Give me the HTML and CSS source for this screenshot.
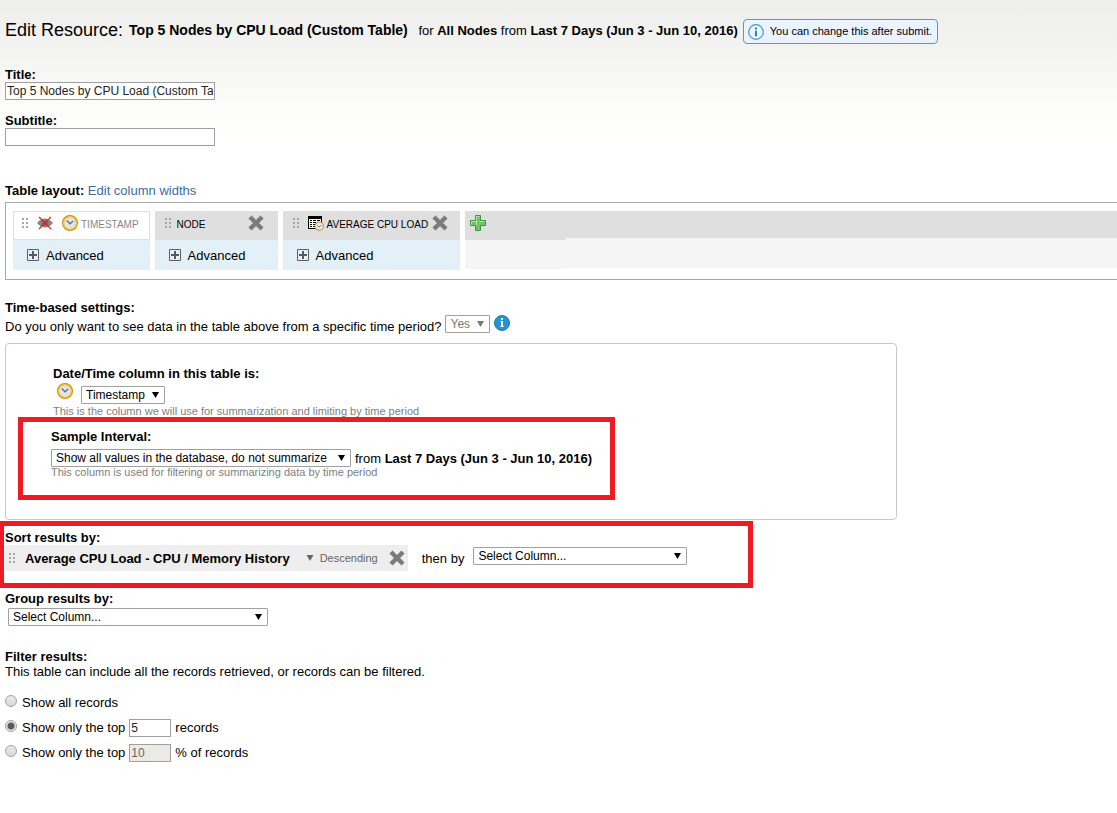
FILE: index.html
```html
<!DOCTYPE html>
<html lang="en">
<head>
    <meta charset="utf-8">
    <title>Edit Resource</title>
    <link rel="stylesheet" href="styles.css">
</head>
<body>
    <!-- shared icons -->
    <svg class="sprite" width="0" height="0" aria-hidden="true">
        <symbol id="grip" viewBox="0 0 6 10">
            <path fill="#a6a6a6" d="M0 0h2v2H0zM4 0h2v2H4zM0 4h2v2H0zM4 4h2v2H4zM0 8h2v2H0zM4 8h2v2H4z"/>
        </symbol>
        <symbol id="clock" viewBox="0 0 16 16">
            <circle cx="8" cy="8" r="7" fill="#dfe4ee" stroke="#c98a00" stroke-width="2"/>
            <circle cx="8" cy="8" r="6.5" fill="none" stroke="#f6cf3c" stroke-width="1.2"/>
            <path d="M4.8 5.6L8 8.8l3.2-2.8" fill="none" stroke="#6a7077" stroke-width="1.4"/>
        </symbol>
        <symbol id="cross" viewBox="0 0 16 16">
            <path d="M2 2l12 12M14 2L2 14" stroke="#7b7b7b" stroke-width="4.4"/>
        </symbol>
        <symbol id="expand" viewBox="0 0 12 12">
            <path d="M.5.5h11v11H.5z" fill="none" stroke="#5f5f5f"/>
            <path d="M2 6h8M6 2v8" stroke="#5a5a5a" stroke-width="2"/>
        </symbol>
        <symbol id="arrow" viewBox="0 0 7 6">
            <path d="M0 0h7L3.5 6z" fill="currentColor"/>
        </symbol>
    </svg>

    <header class="header">
        <h1>Edit Resource:</h1>
        <p class="summary"><b class="resource">Top 5 Nodes by CPU Load (Custom Table)</b> for <b>All Nodes</b> from <b>Last 7 Days (Jun 3 - Jun 10, 2016)</b></p>
        <span class="notice">
            <svg width="16" height="16" viewBox="0 0 16 16" aria-hidden="true">
                <circle cx="8" cy="8" r="7.3" fill="none" stroke="#3f9cc8" stroke-width="1.2"/>
                <path d="M7 3.6h2v2H7zM7 6.8h2v5.4H7z" fill="#2e87b8"/>
            </svg>
            You can change this after submit.
        </span>
    </header>

    <form>
        <div class="field">
            <label for="title">Title:</label>
            <input type="text" id="title" class="text-box" value="Top 5 Nodes by CPU Load (Custom Table)">
        </div>
        <div class="field">
            <label for="subtitle">Subtitle:</label>
            <input type="text" id="subtitle" class="text-box">
        </div>

        <section class="layout">
            <h2>Table layout:</h2> <a href="#">Edit column widths</a>
            <div class="columns">
                <div class="column timestamp">
                    <div class="column-head">
                        <svg class="grip" width="6" height="10"><use href="#grip"/></svg>
                        <svg class="eye" width="16" height="14" viewBox="0 0 16 14">
                            <path d="M0 7Q8-2 16 7Q8 16 0 7z" fill="#858585"/>
                            <circle cx="8" cy="7" r="2.6" fill="#666"/>
                            <path d="M2 1l12 12M14 1L2 13" stroke="#e81c1c" stroke-width="1.2"/>
                        </svg>
                        <svg class="clock" width="16" height="16"><use href="#clock"/></svg>
                        <span>TIMESTAMP</span>
                    </div>
                    <button type="button" class="advanced"><svg width="12" height="12"><use href="#expand"/></svg>Advanced</button>
                </div>
                <div class="column node">
                    <div class="column-head">
                        <svg class="grip" width="6" height="10"><use href="#grip"/></svg>
                        <span>NODE</span>
                        <button type="button" class="remove" aria-label="Remove column"><svg width="16" height="16"><use href="#cross"/></svg></button>
                    </div>
                    <button type="button" class="advanced"><svg width="12" height="12"><use href="#expand"/></svg>Advanced</button>
                </div>
                <div class="column load">
                    <div class="column-head">
                        <svg class="grip" width="6" height="10"><use href="#grip"/></svg>
                        <svg class="table-clock" width="16" height="16" viewBox="0 0 16 16">
                            <path d="M0 1h14v13H0z" fill="#000"/>
                            <path d="M1 4h12v9H1z" fill="#fff"/>
                            <path d="M2 5.5h2M5 5.5h3M9 5.5h3M2 7.5h2M5 7.5h3M9 7.5h3M2 9.5h2M5 9.5h3M2 11.5h2M5 11.5h2" stroke="#000"/>
                            <circle cx="11.2" cy="11.2" r="4.2" fill="#e6eaf2" stroke="#dc9333" stroke-width="1.2"/>
                            <path d="M9.2 10.2l2 2 2-2" fill="none" stroke="#6f7885"/>
                        </svg>
                        <span>AVERAGE CPU LOAD</span>
                        <button type="button" class="remove" aria-label="Remove column"><svg width="16" height="16"><use href="#cross"/></svg></button>
                    </div>
                    <button type="button" class="advanced"><svg width="12" height="12"><use href="#expand"/></svg>Advanced</button>
                </div>
                <div class="add-column">
                    <button type="button" aria-label="Add column">
                        <svg width="16" height="16" viewBox="0 0 16 16">
                            <path d="M5.5.5h5v5h5v5h-5v5h-5v-5h-5v-5h5z" fill="#70c464" stroke="#3f9445"/>
                            <path d="M6.5 10V1.5h3M1.5 9.5v-3h5M9.5 6.5h5" fill="none" stroke="#b4e6a4"/>
                        </svg>
                    </button>
                </div>
                <div class="filler"></div>
            </div>
        </section>

        <section class="time">
            <h2>Time-based settings:</h2>
            <div class="question">
                <label for="period">Do you only want to see data in the table above from a specific time period?</label>
                <span class="drop">
                    <select id="period" disabled><option>Yes</option></select>
                    <svg width="7" height="6"><use href="#arrow"/></svg>
                </span>
                <svg class="info" width="16" height="16" viewBox="0 0 16 16">
                    <circle cx="8" cy="8" r="7.5" fill="#2593ce" stroke="#1b7cb3"/>
                    <path d="M7 3h2v2H7zM6.5 6H9v5h.7v1H6.3v-1H7V7h-.5z" fill="#fff"/>
                </svg>
            </div>

            <div class="panel">
                <div class="date-column">
                    <label for="datetime">Date/Time column in this table is:</label>
                    <div class="row">
                        <svg class="clock" width="16" height="16"><use href="#clock"/></svg>
                        <span class="drop">
                            <select id="datetime"><option>Timestamp</option></select>
                            <svg width="7" height="6"><use href="#arrow"/></svg>
                        </span>
                    </div>
                    <p class="hint">This is the column we will use for summarization and limiting by time period</p>
                </div>
                <div class="highlight interval">
                    <label for="interval">Sample Interval:</label>
                    <div class="row">
                        <span class="drop">
                            <select id="interval"><option>Show all values in the database, do not summarize</option></select>
                            <svg width="7" height="6"><use href="#arrow"/></svg>
                        </span>
                        <span>from <b>Last 7 Days (Jun 3 - Jun 10, 2016)</b></span>
                    </div>
                    <p class="hint">This column is used for filtering or summarizing data by time period</p>
                </div>
            </div>
        </section>

        <section class="highlight sort">
            <h2>Sort results by:</h2>
            <div class="row">
                <div class="sort-item">
                    <svg class="grip" width="6" height="10"><use href="#grip"/></svg>
                    <b>Average CPU Load - CPU / Memory History</b>
                    <button type="button" class="direction"><svg width="8" height="6"><use href="#arrow"/></svg>Descending</button>
                    <button type="button" class="remove" aria-label="Remove sorting"><svg width="16" height="16"><use href="#cross"/></svg></button>
                </div>
                <label for="then-by">then by</label>
                <span class="drop">
                    <select id="then-by"><option>Select Column...</option></select>
                    <svg width="7" height="6"><use href="#arrow"/></svg>
                </span>
            </div>
        </section>

        <section class="group">
            <label for="group-by">Group results by:</label>
            <span class="drop">
                <select id="group-by"><option>Select Column...</option></select>
                <svg width="7" height="6"><use href="#arrow"/></svg>
            </span>
        </section>

        <section class="filter">
            <h2>Filter results:</h2>
            <p>This table can include all the records retrieved, or records can be filtered.</p>
            <div class="choice">
                <input type="radio" name="filter" id="all">
                <label for="all">Show all records</label>
            </div>
            <div class="choice">
                <input type="radio" name="filter" id="top" checked>
                <label for="top">Show only the top</label>
                <input type="text" class="text-box" value="5" aria-label="Number of records">
                <span>records</span>
            </div>
            <div class="choice">
                <input type="radio" name="filter" id="percent">
                <label for="percent">Show only the top</label>
                <input type="text" class="text-box" value="10" aria-label="Percent of records" disabled>
                <span>% of records</span>
            </div>
        </section>
    </form>
</body>
</html>
```

FILE: styles.css
```css
* {
    box-sizing: border-box;
}
body {
    margin: 0;
    font-family: "Liberation Sans", Arial, sans-serif;
    font-size: 13px;
    line-height: 15px;
    color: #000;
    background: #fff linear-gradient(#eeeeed, #f3f3f2 50px, #fdfdfc 110px, #fff 150px) no-repeat;
}
h1, h2, p {
    margin: 0;
}
h2 {
    font-size: 13px;
    line-height: 15px;
}
svg {
    flex: none;
    display: block;
}
.sprite {
    position: absolute;
}
button {
    border: none;
    padding: 0;
    background: none;
    font: inherit;
    cursor: pointer;
}
a {
    color: #41699f;
    text-decoration: none;
}

/* header */
.header {
    display: flex;
    align-items: center;
    padding: 19px 5px 0;
    margin-bottom: 23px;
    white-space: nowrap;
}
.header h1 {
    font-size: 18px;
    line-height: 20px;
    font-weight: normal;
    margin: 0 6px 4px 0;
}
.summary {
    padding-bottom: 2px;
}
.resource {
    margin-right: 7px;
    font-size: 14px;
}
.notice {
    display: flex;
    align-items: center;
    gap: 6px;
    height: 25px;
    margin-left: 5px;
    padding: 0 5px 0 4px;
    border: 1px solid #4a9fc8;
    border-radius: 4px;
    background: #eaf3ff;
    font-size: 11px;
}

/* form controls */
.field {
    padding-left: 5px;
    margin-bottom: 13px;
}
.field label,
.date-column label,
.interval label,
.group label {
    display: block;
    font-weight: bold;
}
.text-box {
    display: block;
    width: 210px;
    height: 18px;
    padding: 0 1px;
    border: 1px solid #a0a0a0;
    background: #fff;
    font-family: inherit;
    font-size: 12px;
    color: #222;
}
.text-box:disabled {
    background: #ebebe4;
    color: #666;
}
.drop {
    display: inline-grid;
    align-items: center;
}
.drop select,
.drop svg {
    grid-area: 1 / 1;
}
.drop select {
    appearance: none;
    width: 100%;
    height: 18px;
    padding: 0 19px 0 4px;
    border: 1px solid #a0a0a0;
    border-radius: 1px;
    background: #fff;
    font-family: inherit;
    font-size: 12px;
    color: #000;
    opacity: 1;
}
.drop svg {
    justify-self: end;
    margin-right: 6px;
    pointer-events: none;
}
.drop select:disabled,
.drop select:disabled + svg {
    color: #777;
}
.row {
    display: flex;
    align-items: center;
}

/* table layout */
.layout {
    padding: 24px 0 20px 5px;
}
.layout h2 {
    display: inline-block;
}
.columns {
    display: flex;
    gap: 5px;
    margin-top: 4px;
    padding: 8px 0 9px 7px;
    border: 1px solid #a8a8a8;
    border-right: none;
}
.column {
    background: #e4f0f8;
}
.column-head {
    display: flex;
    align-items: center;
    height: 29px;
    padding: 0 14px 5px 10px;
    background: #dfdfdf;
    font-size: 10px;
}
.column-head .grip {
    margin-right: 6px;
}
.column-head span {
    padding-top: 3px;
}
.timestamp .column-head {
    padding: 0 10px 5px 8px;
    border: 1px solid #dfdfdf;
    background: #fff;
    color: #888;
}
.timestamp .column-head .grip,
.load .column-head .grip,
.eye {
    margin-right: 9px;
}
.column-head .clock,
.table-clock {
    margin-right: 3px;
}
.node {
    width: 123px;
}
.node .remove {
    margin-left: auto;
}
.load .column-head {
    padding-right: 12px;
}
.load .remove {
    margin-left: 4px;
}
.advanced {
    display: flex;
    align-items: center;
    gap: 7px;
    height: 30px;
    padding-left: 14px;
}
.add-column {
    width: 100px;
    height: 58px;
    background: linear-gradient(#dfdfdf 29px, #f5f5f5 29px);
}
.add-column button {
    padding: 4px 5px;
}
.filler {
    flex: 1;
    height: 57px;
    margin-left: -5px;
    background: linear-gradient(#dfdfdf 27px, #f5f5f5 27px);
}

/* time-based settings */
.time h2,
.question {
    margin-left: 5px;
}
.question {
    display: flex;
    align-items: flex-start;
    gap: 4px;
}
.question label {
    padding-top: 4px;
}
.panel {
    max-width: 892px;
    margin: 9px 5px 0;
    padding: 22px 12px 19px;
    border: 1px solid #c8c8c8;
    border-radius: 4px;
}
.date-column {
    padding-left: 35px;
}
.date-column .row {
    align-items: flex-start;
    gap: 8px;
    padding: 2px 0 2px 4px;
}
.date-column .drop {
    margin-top: 3px;
}
.hint {
    font-size: 11px;
    line-height: 11px;
    color: #808080;
}
.highlight {
    width: fit-content;
    border: 5px solid #ed1c24;
}
.interval {
    padding: 7px 18px 17px 28px;
}
.interval .row {
    gap: 4px;
    padding-top: 5px;
}
.interval .drop {
    min-width: 300px;
}

/* sort, group and filter */
.sort {
    margin-top: 1px;
    padding: 4px 61px 12px 1px;
    border-left-width: 4px;
}
.sort-item {
    display: flex;
    align-items: center;
    height: 26px;
    margin-right: 14px;
    padding: 0 3px 0 4px;
    background: #eee;
}
.sort-item .grip {
    margin-right: 10px;
}
.direction {
    display: flex;
    align-items: center;
    gap: 6px;
    margin: 0 11px 0 16px;
    font-size: 11px;
    color: #666;
}
.sort .drop {
    width: 214px;
    margin: 0 0 4px 9px;
}
.group {
    padding: 3px 5px 23px;
}
.group .drop {
    width: 260px;
    margin: 2px 3px 0;
}
.filter {
    padding: 0 5px;
}
.filter p {
    margin-bottom: 11px;
}
.choice {
    display: flex;
    align-items: center;
    gap: 4px;
    height: 25px;
}
.choice .text-box {
    width: 42px;
}
.choice input[type="radio"] {
    appearance: none;
    width: 12px;
    height: 12px;
    margin: 0 1px 4px 0;
    border: 1px solid #a3a3a3;
    border-radius: 50%;
    background: linear-gradient(#e9e9e9, #d8d8d8);
}
.choice input[type="radio"]:checked {
    background: radial-gradient(#5a5a5a 0 3px, #e4e4e4 4px);
}
```
